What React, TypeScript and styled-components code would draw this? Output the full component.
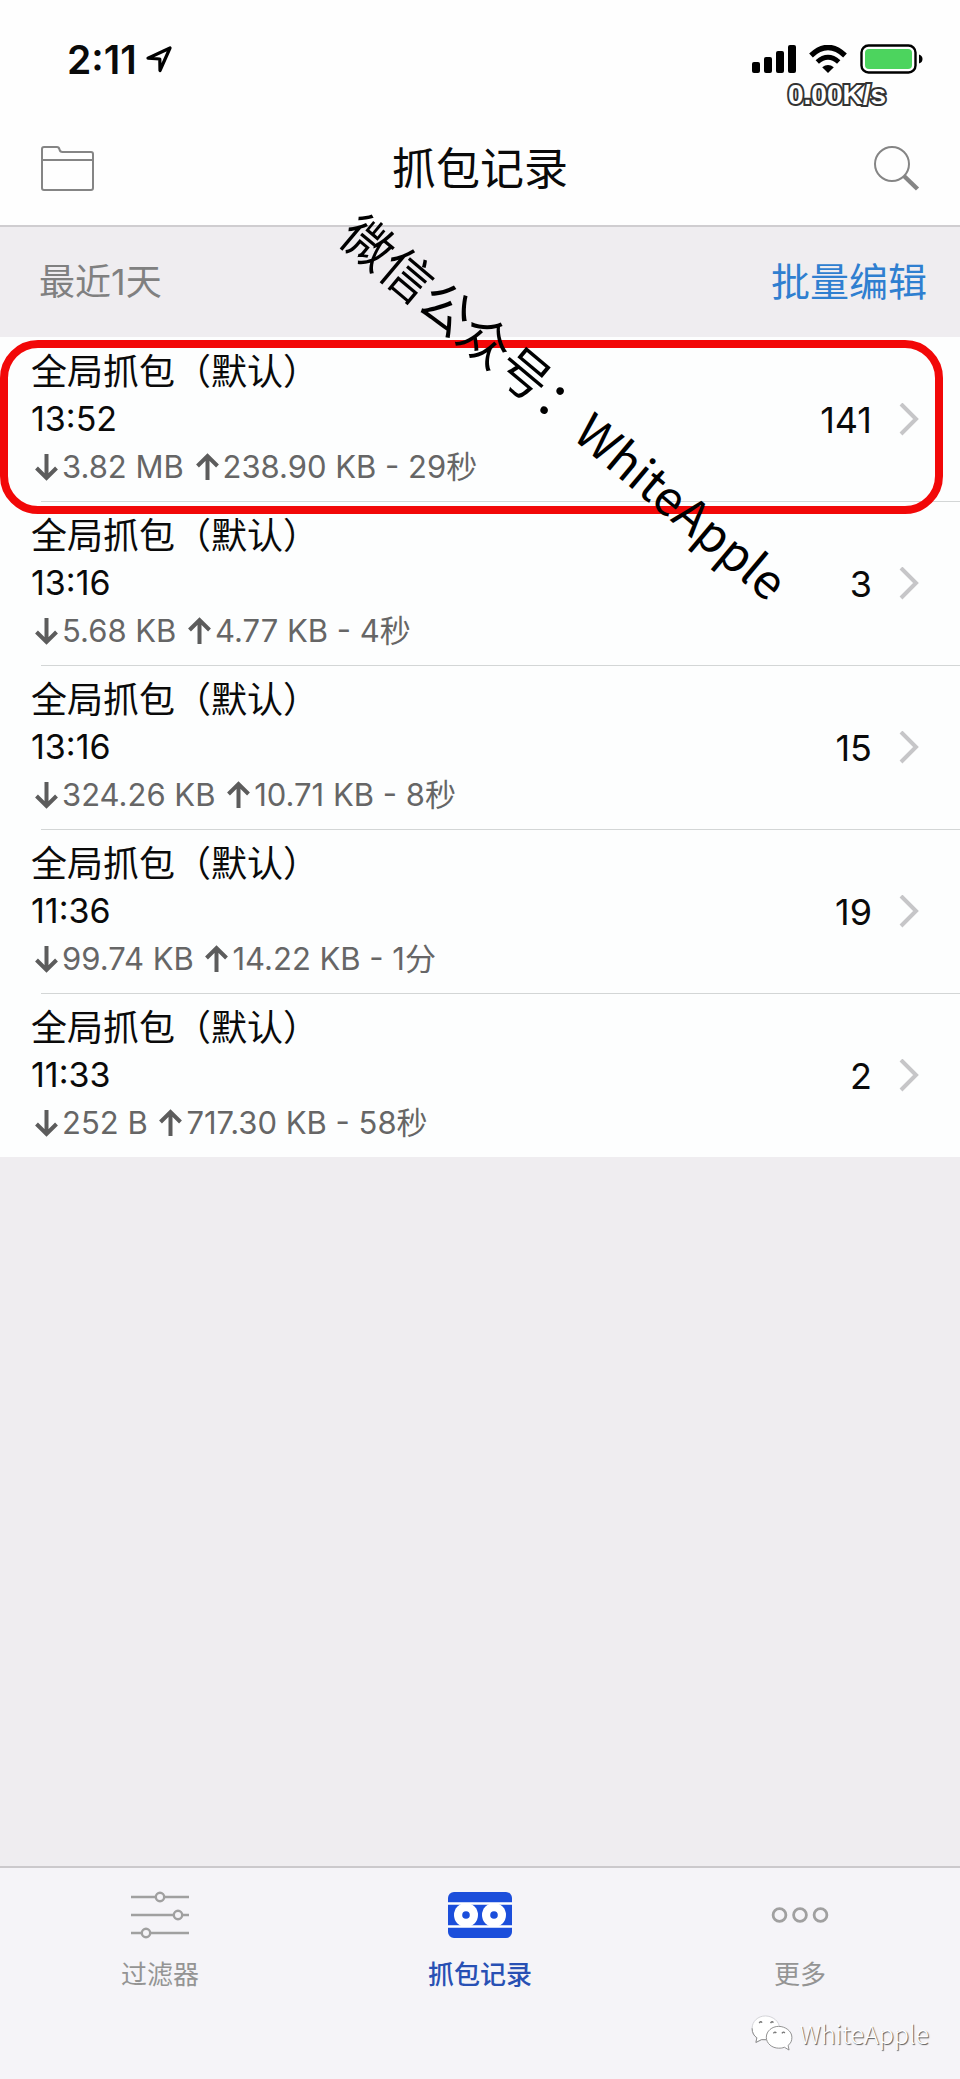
import React from "react";
import styled, { createGlobalStyle, css } from "styled-components";

const GlobalStyle = createGlobalStyle`
  *, *::before, *::after { box-sizing: border-box; }
  body {
    margin: 0;
    background: #efedf0;
    color: #0a0a0a;
    font-family: Inter, "Noto Sans CJK SC", sans-serif;
  }
  h1, h2, p, ul { margin: 0; padding: 0; font-weight: 400; }
  button { border: 0; padding: 0; background: none; font: inherit; color: inherit; cursor: pointer; }
  a { color: inherit; text-decoration: none; }
  svg { display: block; flex: none; }
`;

const Screen = styled.div`
  display: flex;
  flex-direction: column;
  min-height: 100vh;
  overflow-x: hidden;
`;

const Header = styled.header`
  background: #fefefe;
  border-bottom: 2px solid #cfcdd0;
`;

const StatusBar = styled.div`
  display: flex;
  justify-content: space-between;
  height: 112px;
  padding: 40px 37px 0 67px;
`;

const Clock = styled.div`
  display: flex;
  align-items: center;
  gap: 9px;
  height: 38px;
  font-size: 39px;
  font-weight: 600;
`;

const StatusRight = styled.div`
  display: flex;
  flex-direction: column;
`;

const Indicators = styled.div`
  display: flex;
  flex: none;
  align-items: center;
  gap: 13px;
  height: 38px;
`;

const Speed = styled.div`
  padding-left: 36px;
  font: 700 28px/34px "Liberation Sans", Arial, sans-serif;
  color: #fff;
  -webkit-text-stroke: 4px #333;
  paint-order: stroke fill;
`;

const NavBar = styled.div`
  display: grid;
  grid-template-columns: 80px 1fr 80px;
  align-items: center;
  height: 113px;
  padding: 0 40px;
`;

const Title = styled.h1`
  text-align: center;
  font-size: 44px;
  line-height: 60px;
`;

const IconButton = styled.button<{ $end?: boolean }>`
  display: flex;
  justify-content: ${(p) => (p.$end ? "flex-end" : "flex-start")};
  color: #858585;
`;

const SectionBar = styled.div`
  display: flex;
  align-items: center;
  justify-content: space-between;
  height: 110px;
  padding: 0 33px 6px 39px;
  background: #efedf0;
`;

const SectionTitle = styled.h2`
  font-size: 36px;
  color: #808080;
`;

const EditButton = styled.button`
  font-size: 39px;
  color: #2f7fd0;
`;

const Records = styled.ul`
  position: relative;
  list-style: none;
  background: #fdfefe;
`;

const Record = styled.li`
  position: relative;
  & + &::before {
    content: "";
    position: absolute;
    top: 0;
    left: 41px;
    right: 0;
    height: 1px;
    background: #d3d6d6;
  }
`;

const RecordLink = styled.a`
  display: flex;
  align-items: center;
  height: 164px;
  padding: 2px 41px 0 31px;
`;

const RecordText = styled.div`
  flex: 1;
  min-width: 0;
`;

const RecordName = styled.p`
  font-size: 36px;
  line-height: 46px;
`;

const RecordTime = styled.p`
  font-size: 34px;
  line-height: 48px;
`;

const Traffic = styled.p`
  display: flex;
  align-items: center;
  padding-left: 1px;
  font-size: 31px;
  line-height: 48px;
  color: #666;
  white-space: pre;
`;

const Count = styled.span`
  margin-right: 27px;
  font-size: 36px;
  line-height: 48px;
`;

const Highlight = styled.div`
  position: absolute;
  z-index: 1;
  top: 3px;
  left: 0;
  right: 17px;
  height: 174px;
  border: 8px solid #f20808;
  border-radius: 38px;
  pointer-events: none;
`;

const Watermark = styled.li`
  position: absolute;
  z-index: 2;
  top: -136px;
  left: 370px;
  font: 400 51px/60px "Noto Sans CJK SC", sans-serif;
  color: #000;
  white-space: nowrap;
  transform: rotate(40deg);
  transform-origin: 0 0;
  pointer-events: none;
`;

const WatermarkName = styled.span`
  font-size: 48px;
`;

const Filler = styled.div`
  flex: 1;
`;

const Footer = styled.footer`
  background: #f5f4f8;
  border-top: 2px solid #cbc9cc;
`;

const Tabs = styled.nav`
  display: grid;
  grid-template-columns: repeat(3, 1fr);
`;

const Tab = styled.a<{ $active?: boolean }>`
  display: flex;
  flex-direction: column;
  align-items: center;
  gap: 13px;
  padding-top: 20px;
  font-size: 26px;
  line-height: 40px;
  color: #949494;
  ${(p) =>
    p.$active &&
    css`
      color: #2850b4;
      font-weight: 500;
    `}
`;

const Signature = styled.div`
  display: flex;
  align-items: center;
  justify-content: flex-end;
  gap: 6px;
  height: 84px;
  padding: 0 31px 8px 0;
  font: 300 25px/40px "Noto Sans CJK SC", sans-serif;
  color: #fff;
  text-shadow: 1px 1px 1px #555;
`;

const LocationIcon = () => (
  <svg width="26" height="27" viewBox="0 0 26 27" fill="none" stroke="#000" strokeWidth="3.2" strokeLinejoin="round">
    <path d="M2 12.200 24 2 14 24.500 13.800 13Z" />
  </svg>
);

const SignalIcon = () => (
  <svg width="44" height="28" viewBox="0 0 44 28">
    <rect x="0" y="17" width="8" height="11" rx="2" />
    <rect x="12" y="12" width="8" height="16" rx="2" />
    <rect x="24" y="6" width="8" height="22" rx="2" />
    <rect x="36" y="0" width="8" height="28" rx="2" />
  </svg>
);

const WifiIcon = () => (
  <svg width="38" height="28" viewBox="0 0 38 28">
    <path d="M2 10.500Q19-5.500 36 10.500" fill="none" stroke="#000" strokeWidth="5.400" />
    <path d="M8.300 17Q19 7.500 29.700 17" fill="none" stroke="#000" strokeWidth="5" />
    <path d="M13.200 22.300Q19 17.500 24.800 22.300L19 28Z" />
  </svg>
);

const BatteryIcon = () => (
  <svg width="63" height="30" viewBox="0 0 63 30">
    <rect x="1.500" y="1.500" width="54" height="27" rx="7" fill="#fff" stroke="#000" strokeWidth="2.400" />
    <rect x="5" y="5" width="47" height="20" rx="4" fill="#4cd45e" />
    <path d="M59 10.500Q62.500 11.500 62.500 15T59 19.500Z" />
  </svg>
);

const FolderIcon = () => (
  <svg width="55" height="47" viewBox="0 0 55 47" fill="none" stroke="currentColor" strokeWidth="2">
    <path d="M2 43V4Q2 2 4 2H17Q19 2 19.500 4.500T22.500 7H51Q53 7 53 9V43Q53 45 51 45H4Q2 45 2 43ZM2 15H53" />
  </svg>
);

const SearchIcon = () => (
  <svg width="47" height="47" viewBox="0 0 47 47" fill="none" stroke="currentColor">
    <circle cx="19" cy="19" r="17" strokeWidth="2" />
    <path d="M31 31 44.500 44" strokeWidth="4.500" />
  </svg>
);

const ArrowIcon = ({ up }: { up?: boolean }) => (
  <svg width="30" height="28" viewBox="0 0 30 28" fill="none" stroke="#5c5c5c" strokeWidth="4">
    {up ? <path d="M14.500 27V4M4.500 13 14.500 3 24.500 13" /> : <path d="M14.500 1V24M4.500 15 14.500 25 24.500 15" />}
  </svg>
);

const ChevronIcon = () => (
  <svg width="20" height="34" viewBox="0 0 20 34" fill="none" stroke="#c6c6c8" strokeWidth="4">
    <path d="M2 1 17 16 2 31" />
  </svg>
);

const FilterIcon = () => (
  <svg width="58" height="54" viewBox="0 0 58 54" fill="#f5f4f8" stroke="#a0a0a0" strokeWidth="2.400">
    <path d="M0 9H58M0 27H58M0 45H58" />
    <circle cx="29" cy="9" r="4.200" />
    <circle cx="47" cy="27" r="4.200" />
    <circle cx="15" cy="45" r="4.200" />
  </svg>
);

const TapeIcon = () => (
  <svg width="64" height="54" viewBox="0 0 64 54">
    <rect y="4" width="64" height="46" rx="6" fill="#1b4edb" />
    <path d="M0 15.500H64M0 38.500H64" stroke="#fff" strokeWidth="2.400" />
    <circle cx="18" cy="27" r="12" fill="#fff" />
    <circle cx="46" cy="27" r="12" fill="#fff" />
    <circle cx="18" cy="27" r="3.800" fill="#1b4edb" />
    <circle cx="46" cy="27" r="3.800" fill="#1b4edb" />
  </svg>
);

const MoreIcon = () => (
  <svg width="58" height="54" viewBox="0 0 58 54" fill="none" stroke="#a0a0a0" strokeWidth="2.800">
    <circle cx="8.500" cy="27" r="6.400" />
    <circle cx="29" cy="27" r="6.400" />
    <circle cx="49.500" cy="27" r="6.400" />
  </svg>
);

const ChatIcon = () => (
  <svg width="42" height="36" viewBox="0 0 44 38" fill="#fff">
    <path
      d="M15 1C7 1 1 7 1 14c0 5 2 8 5 10l-1 5 6-3c12 2 19-4 19-12C30 7 23 1 15 1Z"
      stroke="#d2d2d6"
    />
    <path d="M1 14c0 5 2 8 5 10l-1 5 6-3 5 0" fill="none" stroke="#8c8c8c" />
    <path d="M8.500 8.500Q10 6 11.500 8M20.500 8.500Q22 6 23.500 8" fill="none" stroke="#777" strokeWidth="1.500" />
    <path
      d="M29 12c-7 0-13 5-13 11.500S22 35 29 35c2 0 4 0 6-1l5 3-1-5c3-2 4-5 4-8.500C43 17 36 12 29 12Z"
      stroke="#8c8c8c"
    />
    <path d="M23.500 19.500Q25 17 26.500 19M32.500 19.500Q34 17 35.500 19" fill="none" stroke="#777" strokeWidth="1.500" />
  </svg>
);

const records = [
  { time: "13:52", down: "3.82 MB", up: "238.90 KB", span: "29秒", count: 141 },
  { time: "13:16", down: "5.68 KB", up: "4.77 KB", span: "4秒", count: 3 },
  { time: "13:16", down: "324.26 KB", up: "10.71 KB", span: "8秒", count: 15 },
  { time: "11:36", down: "99.74 KB", up: "14.22 KB", span: "1分", count: 19 },
  { time: "11:33", down: "252 B", up: "717.30 KB", span: "58秒", count: 2 },
];

export default function App() {
  return (
    <Screen>
      <GlobalStyle />
      <Header>
        <StatusBar>
          <Clock>
            2:11
            <LocationIcon />
          </Clock>
          <StatusRight>
            <Indicators>
              <SignalIcon />
              <WifiIcon />
              <BatteryIcon />
            </Indicators>
            <Speed>0.00K/s</Speed>
          </StatusRight>
        </StatusBar>
        <NavBar>
          <IconButton aria-label="文件夹">
            <FolderIcon />
          </IconButton>
          <Title>抓包记录</Title>
          <IconButton aria-label="搜索" $end>
            <SearchIcon />
          </IconButton>
        </NavBar>
      </Header>
      <SectionBar>
        <SectionTitle>最近1天</SectionTitle>
        <EditButton>批量编辑</EditButton>
      </SectionBar>
      <Records>
        {records.map((r, i) => (
          <Record key={i}>
            <RecordLink href="#">
              <RecordText>
                <RecordName>全局抓包（默认）</RecordName>
                <RecordTime>{r.time}</RecordTime>
                <Traffic>
                  <ArrowIcon />
                  {r.down + " "}
                  <ArrowIcon up />
                  {`${r.up} - ${r.span}`}
                </Traffic>
              </RecordText>
              <Count>{r.count}</Count>
              <ChevronIcon />
            </RecordLink>
            {i === 0 && <Highlight />}
          </Record>
        ))}
        <Watermark>
          微信公众号：<WatermarkName>WhiteApple</WatermarkName>
        </Watermark>
      </Records>
      <Filler />
      <Footer>
        <Tabs>
          <Tab href="#">
            <FilterIcon />
            过滤器
          </Tab>
          <Tab href="#" $active>
            <TapeIcon />
            抓包记录
          </Tab>
          <Tab href="#">
            <MoreIcon />
            更多
          </Tab>
        </Tabs>
        <Signature>
          <ChatIcon />
          WhiteApple
        </Signature>
      </Footer>
    </Screen>
  );
}
